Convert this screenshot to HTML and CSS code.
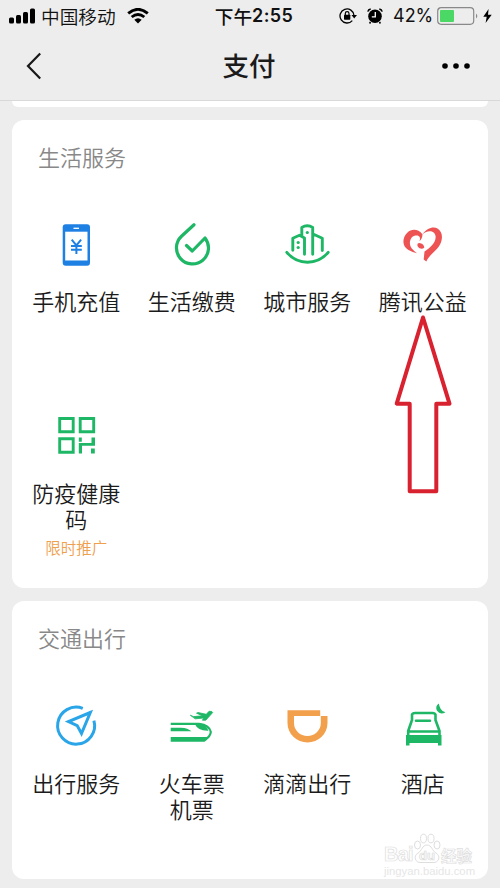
FILE: index.html
```html
<!DOCTYPE html>
<html lang="zh-CN">
<head>
<meta charset="utf-8">
<title>支付</title>
<link rel="stylesheet" href="styles.css">
</head>
<body>
<header class="header">
  <div class="status">
    <div class="carrier">
      <svg class="signal" width="27" height="18" viewBox="0 0 27 18"><rect x="0" y="10.5" width="5" height="6" rx="1.5"/><rect x="7" y="8" width="5" height="8.500" rx="1.500"/><rect x="14" y="5" width="5" height="11.500" rx="1.500"/><rect x="21" y="1.500" width="5" height="15" rx="1.500"/></svg>
      <span>中国移动</span>
      <svg class="wifi" width="22" height="16" viewBox="0 0 22 16"><path d="M1.200 5.400Q11-2.700 20.800 5.400M4.700 9Q11 3.800 17.300 9" fill="none" stroke="#000" stroke-width="2.900"/><path d="M7.300 11.700Q11 8.600 14.700 11.700L11 15.400Z"/></svg>
    </div>
    <div class="clock">下午<b>2:55</b></div>
    <div class="indicators">
      <svg width="18" height="16" viewBox="0 0 18 16"><path d="M13.300 12.600A7 7 0 1 1 15 7.500" fill="none" stroke="#000" stroke-width="1.300"/><path d="M12.500 7H18L15.200 10.500Z"/><rect x="5" y="6.700" width="6.300" height="5" rx=".6"/><path d="M6.300 7V5.500a1.850 1.850 0 0 1 3.700 0V7" fill="none" stroke="#000" stroke-width="1.200"/></svg>
      <svg class="alarm" width="16" height="16" viewBox="0 0 16 16"><circle cx="8" cy="8.300" r="6.800"/><path d="M3.500 14L2.600 15.500M12.500 14L13.400 15.500M.8 3.700Q1.300 1.500 3.700 1M15.200 3.700Q14.700 1.500 12.300 1" stroke="#000" stroke-width="1.500" fill="none"/><path d="M8.300 4V8.800H4.800" stroke="#fff" stroke-width="1.300" fill="none"/></svg>
      <span class="percent">42%</span>
      <svg class="battery" width="42" height="18" viewBox="0 0 42 18"><rect x=".7" y=".7" width="36" height="16.600" rx="3.500" fill="none" stroke="#898989" stroke-width="1.200"/><rect x="3" y="3" width="14" height="12" rx="1" fill="#4bd864"/><path d="M39 6.500Q41.700 9 39 11.500Z" fill="#898989"/></svg>
      <svg class="bolt" width="9" height="14" viewBox="0 0 9 14"><path d="M5.600 0L.3 7.700H3.700L2.600 14 8.700 5.800H5Z"/></svg>
    </div>
  </div>
  <nav class="nav">
    <svg width="16" height="28" viewBox="0 0 16 28"><path d="M14.200 1.500L2 14L14.200 26.500" fill="none" stroke="#181818" stroke-width="2.200"/></svg>
    <h1>支付</h1>
    <svg width="30" height="8" viewBox="0 0 30 8"><circle cx="4" cy="4" r="2.800"/><circle cx="15" cy="4" r="2.800"/><circle cx="26" cy="4" r="2.800"/></svg>
  </nav>
</header>
<main class="content">
  <section class="card card-peek"></section>
  <section class="card card-life">
    <h2>生活服务</h2>
    <div class="grid">
      <div class="item">
        <svg class="icon" viewBox="0 0 48 48"><rect x="10.700" y="3.300" width="27.300" height="41.400" rx="3" fill="#1f80e4"/><path d="M13.200 10.700H35.500V39.500H13.200Z" fill="#fff"/><path d="M21.500 7.300H27" stroke="#fff" stroke-width="1.300"/><path d="M19.700 18.700L24.400 24.500 29.100 18.700M19 25H29.800M19 28.800H29.800M24.400 24.500V33" fill="none" stroke="#1f80e4" stroke-width="2"/></svg>
        <p>手机充值</p>
      </div>
      <div class="item">
        <svg class="icon green" viewBox="0 0 48 48"><path d="M26 3.800L13.500 15.300A16 16 0 1 0 37 17L24.300 30 18.500 24.500" stroke-width="3.200"/></svg>
        <p>生活缴费</p>
      </div>
      <div class="item">
        <svg class="icon green" viewBox="0 0 48 48"><path d="M9.800 29.300V17.300L16.500 14.300L21.500 17V33.300M18.800 14.500V6.500Q21.500 4.800 24.300 4.800T29.700 6.500V33.300M30 13L39.300 17.300V29.500M3.800 31.300Q12 41.200 24.500 41.200T45.200 31.300" stroke-width="2.900"/><g class="dots"><circle cx="24.300" cy="11.500" r="1.600"/><circle cx="15.200" cy="21.500" r="1.600"/><circle cx="15.200" cy="26.500" r="1.600"/></g></svg>
        <p>城市服务</p>
      </div>
      <div class="item">
        <svg class="icon" viewBox="0 0 48 48"><g fill="#ee5354"><path d="M23.500 13.300C19.500 8 12.500 7.500 8.500 11.500C3 16.500 3 25 9 28.700Q13 31 18 32.300Q14.500 29.500 12.800 27.500C9.500 23.300 10.500 16.500 15.500 14.800C20 13.300 22.300 16.500 20.300 20.200C22.300 18.800 23.300 17 23.500 13.300Z"/><path d="M23.500 13.300C27.500 7.500 34 5 38.500 7.500C45 11.500 43.500 20.500 39.700 25.700C35.700 30.800 30.300 34 27.300 40.500L24.700 38.500L25.500 30.500C31.500 26.500 37 21.500 36.600 15.300C36 9.300 28.500 8.500 23.500 13.300Z"/><path d="M18.300 24Q18.500 21.500 21.300 22.300Q25 23 25.300 26.500Q23.500 28.500 20.500 27.300Q18.500 26 18.300 24Z"/></g></svg>
        <p>腾讯公益</p>
      </div>
      <div class="item">
        <svg class="icon green" viewBox="0 0 48 48"><path d="M7.700 6.500H21.200V19.800H7.700ZM28.200 6.500H41.700V19.800H28.200ZM7.700 26.800H21.200V40.200H7.700Z" stroke-width="2.900" stroke-linejoin="miter"/><path d="M26.800 25.500h3v4.200h-3ZM39.500 25.500h3.500v8.300h-13v7.700h-3.200V31h12.700ZM39 36.600h3.800v5H39Z" fill="#1eb766" stroke="none"/></svg>
        <p>防疫健康码</p>
        <span class="note">限时推广</span>
      </div>
    </div>
  </section>
  <section class="card card-travel">
    <h2>交通出行</h2>
    <div class="grid">
      <div class="item">
        <svg class="icon" viewBox="0 0 48 48"><g fill="none" stroke="#2aa5e8" stroke-width="3"><path d="M30.800 6.400A18.500 18.500 0 1 0 41.900 18.600"/><path d="M38.300 10.500L16.500 19.500L25.200 23.600L29.500 31.500Z"/></g></svg>
        <p>出行服务</p>
      </div>
      <div class="item">
        <svg class="icon green" viewBox="0 0 48 48"><path d="M2.700 21.800H31Q41.500 23 42.800 30Q42.500 34.500 37 37.500" stroke-width="2.200" stroke-linecap="butt"/><g fill="#1eb766" stroke="none"><path d="M2.700 25.700H13Q20 26 23.500 29.300H2.700ZM2.700 35H40.500Q39.500 38 36.500 39.800H2.700ZM26.500 21.500H32.500Q38.500 23.500 40.500 28.800Q30 29.300 26.500 21.500Z"/><path stroke="#1eb766" stroke-width=".8" d="M22.700 13.400L25.500 14.600 34.500 13.800 28.500 11.200 30 10.500 38.300 12.300 41 9.300Q44.500 9 44.700 10.500L41.800 13.800 37.800 18.200H34.400L35.800 16 27.500 16.800Z"/></g></svg>
        <p>火车票<br>机票</p>
      </div>
      <div class="item">
        <svg class="icon" viewBox="0 0 48 48"><path fill="#f2a04c" fill-rule="evenodd" d="M4.500 8.200H37.200V14H44.500V21A20 19.500 0 0 1 4.500 21ZM11 14V21A13.400 13 0 0 0 37.800 21V14Z"/></svg>
        <p>滴滴出行</p>
      </div>
      <div class="item">
        <svg class="icon green" viewBox="0 0 48 48"><path d="M13 18.500V12.700Q13.500 11 16 11H33.500Q36 11 36.500 12.700V18.500M13 18L9.200 29V35M36.500 18L40.500 29V35M17 18.700H31M9.500 29.500H40" stroke-width="2.600"/><path d="M7 33H42.500V43.500H39V41H10.500V43.500H7Z" fill="#1eb766" stroke="none"/><path d="M39.800 1.500Q35.800 4.300 38 8.800Q41.300 13.300 46.500 10.200Q43 9.500 41.600 6.800Q40.300 4.300 39.800 1.500Z" fill="#1eb766" stroke="none"/></svg>
        <p>酒店</p>
      </div>
    </div>
  </section>
</main>
<svg class="arrow" viewBox="393 311 60 184"><path d="M423 317.500L396.700 403.700H409.700V491.300H436.300V403.700H449.500Z"/></svg>
<div class="watermark">
  <div class="brand">
    <span class="bai">Bai</span>
    <svg width="28" height="31" viewBox="0 0 28 31"><g fill="#fff" stroke="#dedede" stroke-width="1"><ellipse cx="4.500" cy="12" rx="3" ry="4"/><ellipse cx="10.500" cy="5.500" rx="3" ry="4.300"/><ellipse cx="18" cy="5.500" rx="3" ry="4.300"/><ellipse cx="24" cy="12" rx="3" ry="4"/><path d="M14 12C9 12 9 18 5 20C0 23 2 30 8 29.500H20C26 30 28 23 23 20C19 18 19 12 14 12Z"/></g><text x="14" y="27" text-anchor="middle">du</text></svg>
    <span class="jy">经验</span>
  </div>
  <div class="url">jingyan.baidu.com</div>
</div>
</body>
</html>
```
FILE: styles.css
```css
* { box-sizing: border-box; }
body {
  margin: 0;
  position: relative;
  width: 500px;
  height: 888px;
  overflow: hidden;
  background: #ededed;
  color: #1b1b1b;
  font-family: "Noto Sans CJK SC", sans-serif;
}
svg { display: block; flex: none; }
h1, h2, p { margin: 0; font-weight: 400; }
.header { height: 101px; border-bottom: 1px solid #d9d9d9; }
.status {
  display: grid;
  grid-template-columns: 1fr auto 1fr;
  align-items: center;
  height: 32px;
  padding: 0 8px 0 9px;
  color: #111;
  font-size: 18.700px;
  line-height: 32px;
}
.carrier, .indicators { display: flex; align-items: center; }
.carrier span { margin-left: 5px; font-weight: 350; line-height: 31px; height: 32px; }
.wifi { margin-left: 11px; }
.clock { font-weight: 500; display: flex; margin-left: 7px; line-height: 31px; }
.clock b { font-family: Inter, sans-serif; font-weight: 600; font-size: 18px; letter-spacing: .4px; line-height: 32px; }
.indicators { justify-content: flex-end; }
.alarm { margin-left: 10px; }
.percent { margin-left: 10px; font-family: Inter, sans-serif; font-size: 18px; width: 39px; }
.battery { margin-left: 5px; }
.bolt { margin-left: 4px; }
.nav {
  display: flex;
  align-items: center;
  justify-content: space-between;
  height: 68px;
  padding: 0 29px 0 26px;
}
.nav h1 { font-size: 26.500px; font-weight: 500; line-height: 66px; height: 68px; margin-left: 15px; }
.content { padding: 0 12px; }
.card { background: #fff; border-radius: 12px; }
.card-peek { height: 6px; margin-bottom: 13px; border-radius: 0 0 12px 12px; }
.card-life { height: 468px; margin-bottom: 13px; }
.card-travel { height: 278px; }
.card h2 { padding: 20px 0 2px 26px; font-size: 22px; font-weight: 350; line-height: 32px; color: #888; }
.grid {
  display: grid;
  grid-template-columns: repeat(4, 115.500px);
  grid-auto-rows: 191px;
  padding: 47px 0 0 6.500px;
}
.item { display: flex; flex-direction: column; align-items: center; text-align: center; }
.icon { width: 48px; height: 48px; }
.green { fill: none; stroke: #1eb766; stroke-linecap: round; stroke-linejoin: round; }
.dots { fill: #1eb766; stroke: none; }
.item p { width: 92px; margin-top: 18px; font-size: 22px; font-weight: 350; line-height: 26px; }
.item:nth-child(n+5) p, .card-travel .item p { margin-top: 19px; }
.note { margin-top: 4px; font-size: 15.500px; font-weight: 350; line-height: 24px; color: #efa04e; }
.arrow { position: absolute; left: 393px; top: 311px; width: 60px; height: 184px; }
.arrow path { fill: none; stroke: #d9222f; stroke-width: 4; stroke-linejoin: round; }
.watermark { position: absolute; left: 384px; top: 833px; width: 90px; }
.brand { display: flex; align-items: flex-end; height: 31px; }
.bai, .jy { color: #fff; -webkit-text-stroke: .7px #dedede; }
.bai { width: 29px; font: 700 20px/20px "Liberation Sans", sans-serif; letter-spacing: -.8px; }
.brand text { font: 700 13px "Liberation Sans", sans-serif; fill: #fff; stroke: #dadada; stroke-width: .7; }
.jy { font-size: 15.500px; line-height: 18px; font-weight: 700; }
.url { color: #e6e6e6; font: 11.300px/14px "Liberation Sans", sans-serif; }
```
